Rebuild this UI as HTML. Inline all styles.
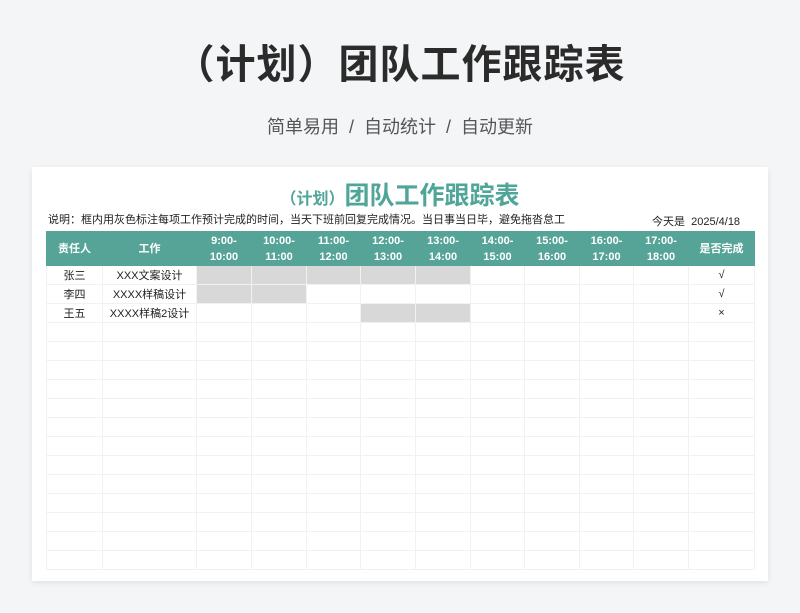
<!DOCTYPE html><html><head><meta charset="utf-8"><style>
body{margin:0;width:800px;height:613px;background:#f3f5f7;font-family:"Liberation Sans","Noto Sans CJK SC",sans-serif;position:relative;overflow:hidden}
.t1{position:absolute;top:32px;left:0;width:800px;text-align:center;font-size:40px;font-weight:bold;color:#2b2b2b;letter-spacing:1px}
.t2{position:absolute;top:113px;left:0;width:800px;text-align:center;font-size:18px;color:#555}
.card{position:absolute;left:32px;top:167px;width:736px;height:414px;background:#fff;box-shadow:0 2px 6px rgba(0,0,0,.08)}
.h{position:absolute;top:176px;left:0;width:800px;text-align:center;color:#4fa597;font-weight:bold;font-size:25px}
.h small{font-size:16px}
.note{position:absolute;top:211px;left:48px;font-size:11px;color:#222}
.date{position:absolute;top:213px;left:652px;font-size:11px;color:#222}
table{position:absolute;left:46px;top:231px;border-collapse:collapse;table-layout:fixed;border:1px solid #8fc4bb}
td,th{padding:0;text-align:center;font-size:11px;border:1px solid #eef2f1;color:#222}
th{background:#55a497;color:#fff;font-weight:bold;height:33px;line-height:16px;border-color:#55a497}
td{height:18px}
.g{background:#d8d8d8}
</style></head><body>
<div class="t1">（计划）团队工作跟踪表</div>
<div class="t2">简单易用 &nbsp;/&nbsp; 自动统计 &nbsp;/&nbsp; 自动更新</div>
<div class="card"></div>
<div class="h"><small>（计划）</small>团队工作跟踪表</div>
<div class="note">说明：框内用灰色标注每项工作预计完成的时间，当天下班前回复完成情况。当日事当日毕，避免拖沓怠工</div>
<div class="date">今天是 &nbsp;2025/4/18</div>
<table>
<colgroup><col style="width:56px"><col style="width:94px"><col style="width:55px"><col style="width:55px"><col style="width:54px"><col style="width:55px"><col style="width:55px"><col style="width:54px"><col style="width:55px"><col style="width:54px"><col style="width:55px"><col style="width:66px"></colgroup>
<tr><th>责任人</th><th>工作</th><th>9:00-<br>10:00</th><th>10:00-<br>11:00</th><th>11:00-<br>12:00</th><th>12:00-<br>13:00</th><th>13:00-<br>14:00</th><th>14:00-<br>15:00</th><th>15:00-<br>16:00</th><th>16:00-<br>17:00</th><th>17:00-<br>18:00</th><th>是否完成</th></tr>
<tr><td>张三</td><td>XXX文案设计</td><td class="g"></td><td class="g"></td><td class="g"></td><td class="g"></td><td class="g"></td><td></td><td></td><td></td><td></td><td>√</td></tr>
<tr><td>李四</td><td>XXXX样稿设计</td><td class="g"></td><td class="g"></td><td></td><td></td><td></td><td></td><td></td><td></td><td></td><td>√</td></tr>
<tr><td>王五</td><td>XXXX样稿2设计</td><td></td><td></td><td></td><td class="g"></td><td class="g"></td><td></td><td></td><td></td><td></td><td>×</td></tr>
<tr><td></td><td></td><td></td><td></td><td></td><td></td><td></td><td></td><td></td><td></td><td></td><td></td></tr>
<tr><td></td><td></td><td></td><td></td><td></td><td></td><td></td><td></td><td></td><td></td><td></td><td></td></tr>
<tr><td></td><td></td><td></td><td></td><td></td><td></td><td></td><td></td><td></td><td></td><td></td><td></td></tr>
<tr><td></td><td></td><td></td><td></td><td></td><td></td><td></td><td></td><td></td><td></td><td></td><td></td></tr>
<tr><td></td><td></td><td></td><td></td><td></td><td></td><td></td><td></td><td></td><td></td><td></td><td></td></tr>
<tr><td></td><td></td><td></td><td></td><td></td><td></td><td></td><td></td><td></td><td></td><td></td><td></td></tr>
<tr><td></td><td></td><td></td><td></td><td></td><td></td><td></td><td></td><td></td><td></td><td></td><td></td></tr>
<tr><td></td><td></td><td></td><td></td><td></td><td></td><td></td><td></td><td></td><td></td><td></td><td></td></tr>
<tr><td></td><td></td><td></td><td></td><td></td><td></td><td></td><td></td><td></td><td></td><td></td><td></td></tr>
<tr><td></td><td></td><td></td><td></td><td></td><td></td><td></td><td></td><td></td><td></td><td></td><td></td></tr>
<tr><td></td><td></td><td></td><td></td><td></td><td></td><td></td><td></td><td></td><td></td><td></td><td></td></tr>
<tr><td></td><td></td><td></td><td></td><td></td><td></td><td></td><td></td><td></td><td></td><td></td><td></td></tr>
<tr><td></td><td></td><td></td><td></td><td></td><td></td><td></td><td></td><td></td><td></td><td></td><td></td></tr>
</table>
</body></html>
